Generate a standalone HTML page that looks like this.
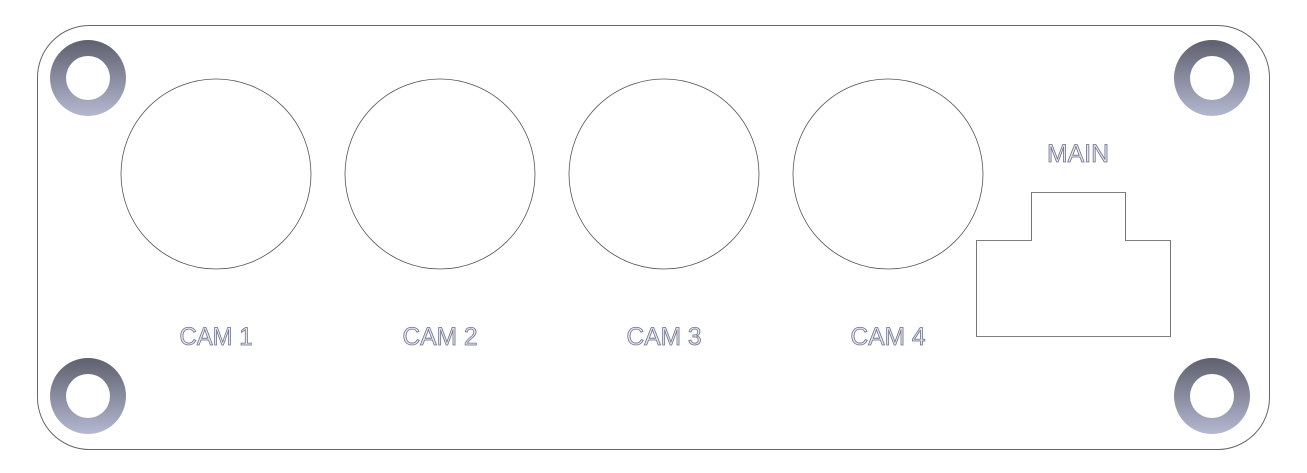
<!DOCTYPE html>
<html><head><style>
html,body{margin:0;padding:0;background:#fff;}
svg{display:block}
text{font-family:"Liberation Sans",sans-serif;font-size:25px;fill:#e4e6f2;stroke:#6d7088;stroke-width:0.8px;text-anchor:middle}
</style></head><body>
<svg width="1307" height="473" viewBox="0 0 1307 473">
<defs>
<linearGradient id="g" x1="0" y1="0" x2="0" y2="1">
<stop offset="0" stop-color="#5e606e"/><stop offset="1" stop-color="#b4b8d0"/>
</linearGradient>
</defs>
<rect x="37.5" y="25.5" width="1232" height="424" rx="52" fill="none" stroke="#666" stroke-width="1"/>
<g fill="url(#g)" fill-rule="evenodd">
<path d="M50,78a38,38 0 1,0 76,0a38,38 0 1,0 -76,0M66,78a22,22 0 1,0 44,0a22,22 0 1,0 -44,0"/>
<path d="M1174,78a38,38 0 1,0 76,0a38,38 0 1,0 -76,0M1190,78a22,22 0 1,0 44,0a22,22 0 1,0 -44,0"/>
<path d="M50,396a38,38 0 1,0 76,0a38,38 0 1,0 -76,0M66,396a22,22 0 1,0 44,0a22,22 0 1,0 -44,0"/>
<path d="M1174,396a38,38 0 1,0 76,0a38,38 0 1,0 -76,0M1190,396a22,22 0 1,0 44,0a22,22 0 1,0 -44,0"/>
</g>
<g fill="none" stroke="#555" stroke-width="0.8">
<circle cx="216" cy="174" r="95"/>
<circle cx="440" cy="174" r="95"/>
<circle cx="664" cy="174" r="95"/>
<circle cx="888" cy="174" r="95"/>
<path d="M1031.5,240.5V192.5H1125.5V240.5H1170.5V336.5H976.5V240.5Z"/>
</g>
<text x="216" y="345" textLength="73" lengthAdjust="spacingAndGlyphs">CAM 1</text>
<text x="440" y="345" textLength="75" lengthAdjust="spacingAndGlyphs">CAM 2</text>
<text x="664" y="345" textLength="75" lengthAdjust="spacingAndGlyphs">CAM 3</text>
<text x="888" y="345" textLength="75" lengthAdjust="spacingAndGlyphs">CAM 4</text>
<text x="1078" y="162" textLength="62" lengthAdjust="spacingAndGlyphs">MAIN</text>
</svg>
</body></html>
